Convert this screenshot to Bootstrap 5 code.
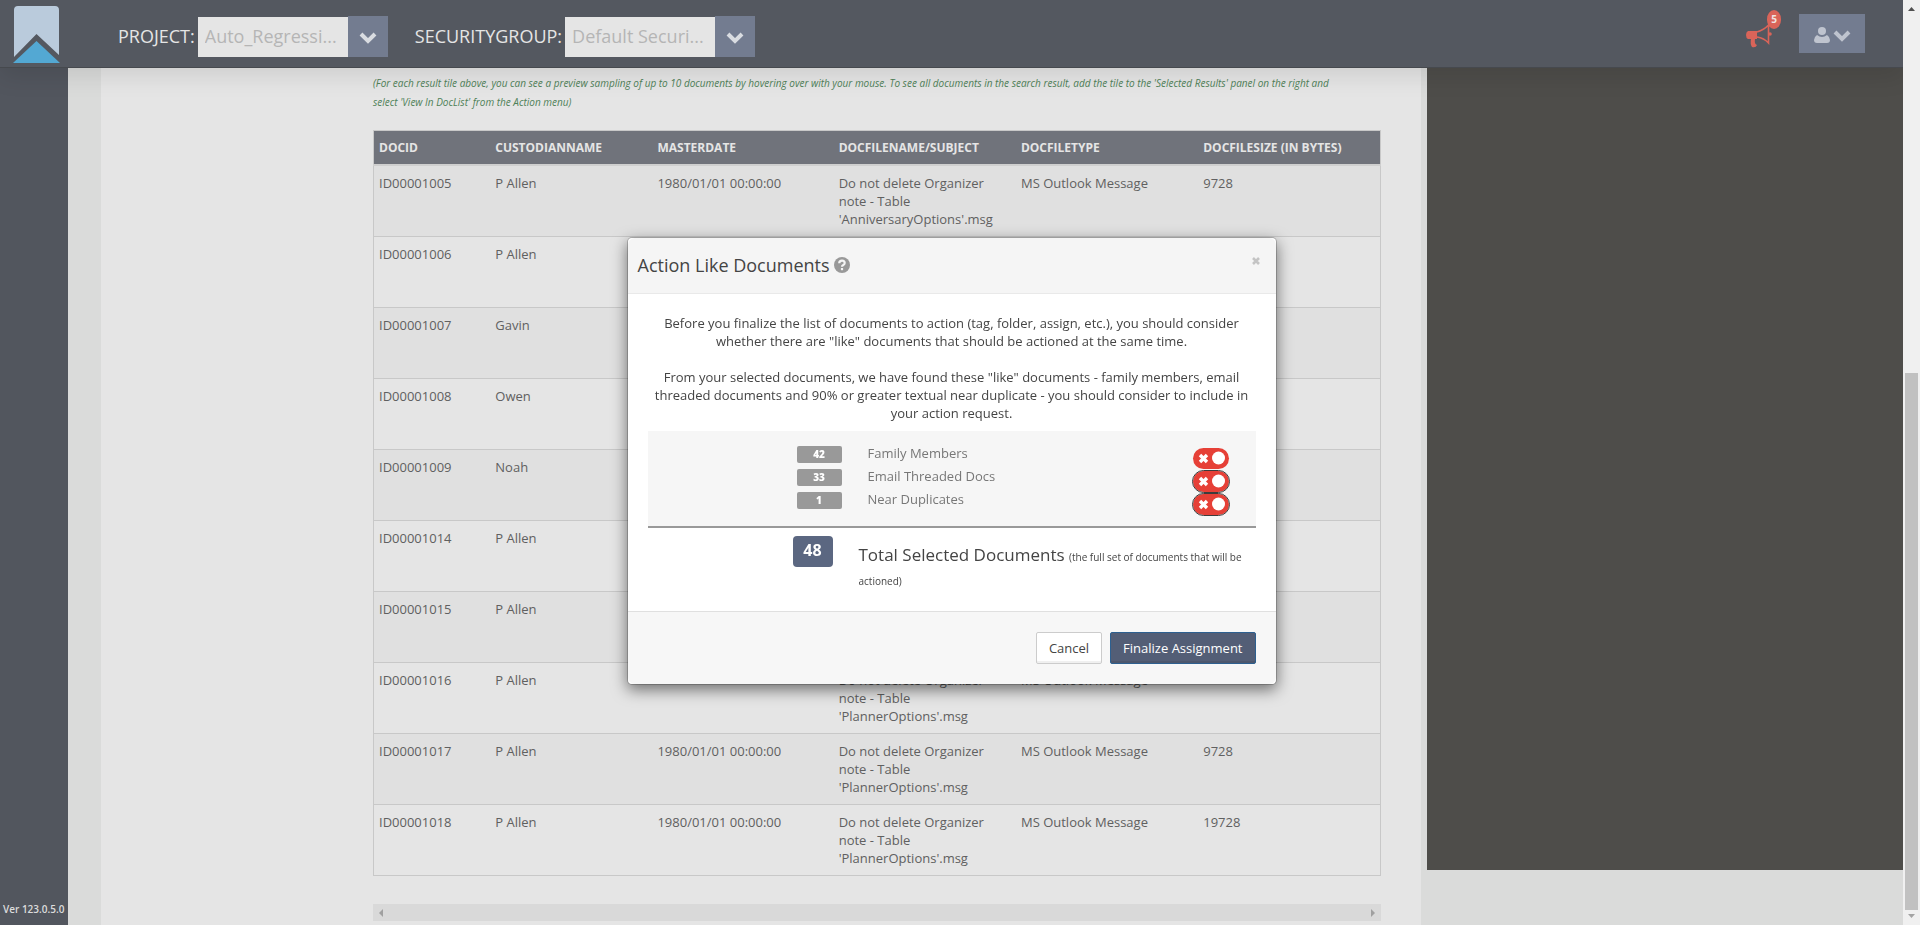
<!DOCTYPE html>
<html lang="en">
<head>
<meta charset="utf-8">
<meta name="viewport" content="width=device-width, initial-scale=1">
<title>Action Like Documents</title>
<link href="https://cdn.jsdelivr.net/npm/bootstrap@5.3.0/dist/css/bootstrap.min.css" rel="stylesheet">
<style>
body{font-family:"Open Sans","Noto Sans",sans-serif;font-size:13px;line-height:18px;color:#606060;background:#dadbda}
.topbar{height:68px;background:#545860;border-bottom:1px solid #46494e;box-shadow:0 8px 24px rgba(0,0,0,.1);z-index:5;padding:0 38px 0 12px}
.brand-mark{width:48px;height:60px}
.pickers{margin-left:58px;padding-top:5px;gap:27px}
.picker label{font-size:18px;line-height:24px;color:#e5e5e5;margin-right:3px}
.picker .picker-text{width:150px;height:40px;margin-top:1px;border:0;background:#e5e5e5;color:#b5b5b5;font-size:18px;padding:0 8px 2px 7px;border-radius:0}
.btn-slate{background:#737c90;border:0;border-radius:0;padding:0}
.picker .btn-slate{width:40px;height:41px}
.user-btn{width:66px;height:39px}
.notice{width:34px;height:36px;margin-right:19px}
.notice-count{top:-6px;left:21px;width:14px;height:19px;border-radius:7px/9px;background:#d96459;color:#f0e4e2;font-size:10px;font-weight:700;line-height:19px}
.sidebar{width:68px;background:#52565e;padding:0 0 7px 3px}
.version{font-size:10px;font-weight:600;color:#dcdcdc}
.results{background:#e5e5e5;margin-left:33px;padding:6px 40px 3px 272px;min-width:0}
.hint{font-size:10px;line-height:19px;font-style:italic;color:#4f8158;margin-bottom:18px}
.doc-table{table-layout:fixed;border:1px solid #c8c8c8;margin-bottom:28px;--bs-table-bg:transparent}
.doc-table>:not(caption)>*>*{padding:8px 5px;border-bottom:1px solid #c8c8c8;color:#606060;box-shadow:none;background:transparent}
.doc-table>thead>tr>th{background:#70737b;color:#e5e5e5;font-size:12px;font-weight:700;border-bottom:2px solid #cfcfcf;padding:8px 5px 7px}
.doc-table>tbody>tr{height:71px}
.doc-table>tbody>tr:nth-child(odd){background:#e0e0e0}
.hscroll{height:17px;background:#d9d9d9;padding:0 5px}
.tray{width:476px;background:#4e4d4a;margin:0 0 55px 6px}
.vscroll{width:17px;background:#f0f0f0;z-index:6;padding:7px 0}
.vscroll-thumb{width:13px;background:#c1c1c1;height:59%}
.modal.like-modal{width:calc(100% - 17px);padding-bottom:4px}
.like-modal .modal-dialog{max-width:650px}
.like-modal .modal-content{border:1px solid rgba(0,0,0,.2);border-radius:5px;box-shadow:0 5px 15px rgba(0,0,0,.5);color:#444}
.like-modal .modal-header{background:#f5f5f5;border-bottom:1px solid #e9e9e9;padding:15px 16px 14px 10px;height:56px}
.like-modal .modal-title{font-size:18px;line-height:24px;font-weight:400;color:#444}
.x-close{background:none;border:0;padding:0;height:8px;line-height:0;margin-top:4px}
.like-modal .modal-body{padding:20px 20px 0}
.like-modal p{margin-bottom:18px}
.like-modal p:last-child{margin-bottom:9px}
.like-panel{background:#f6f6f6;border-bottom:2px solid #999;padding:10px 27px 16px 149px}
.like-row{height:23px;color:#777}
.like-row label{margin-top:3px}
.count-tag{width:45px;height:17px;line-height:17px;background:#999;color:#fff;font-size:10px;font-weight:800;border-radius:2px;margin:5px 26px 0 0}
.like-switch{width:36px;height:21px;border-radius:11px;background:#e64037;margin-top:7px}
.like-switch.outlined{outline:1px solid #3c3c3c}
.like-switch input{opacity:0;inset:0}
.total-line{padding:8px 8px 0 145px}
.total-tag{width:40px;height:31px;line-height:29px;border-radius:4px;background:#5b6781;color:#fff;font-size:16px;font-weight:700;margin-right:26px}
.total-text{font-size:17px;line-height:24px;padding-top:7px;height:75px}
.total-text span{font-size:10px;line-height:18px}
.like-modal .modal-footer{background:#f7f7f7;border-top:1px solid #e0e0e0;padding:20px;gap:8px}
.like-modal .modal-footer>*{margin:0}
.like-modal .modal-footer .btn{font-size:13px;line-height:18px;padding:6px 12px;border-radius:2px;height:32px}
.like-modal .modal-footer .btn-cancel{background:#fff;border:1px solid #ccc;color:#444;box-shadow:inset 0 -2px 0 #f0f0f0}
.btn-finalize{background:#535e76;border:1px solid #2d6090;color:#fff;box-shadow:inset 0 -2px 0 #4d576d}
</style>
</head>
<body>
<div class="d-flex vh-100 overflow-hidden">
  <div class="d-flex flex-column flex-grow-1" style="min-width:0">
    <header class="topbar d-flex align-items-center position-relative flex-shrink-0">
      <a href="#" aria-label="Home" class="d-block lh-1"><svg class="brand-mark" viewBox="0 0 48 60"><path d="M2 53V6q0-4 4-4H43q4 0 4 4V51L24.500 30Z" fill="#bacbdc"/><path d="M1 59 24.500 37 48 59Z" fill="#53a8d3"/></svg></a>
      <form class="pickers d-flex flex-grow-1">
        <div class="picker d-flex align-items-center">
          <label for="project">PROJECT:</label><input id="project" class="picker-text" value="Auto_Regressi..." disabled>
          <button type="button" class="btn btn-slate" aria-label="Choose project"><svg width="18" height="12" viewBox="0 0 18 12"><path d="M2 2 9 9 16 2" fill="none" stroke="#d9dce1" stroke-width="4"/></svg></button>
        </div>
        <div class="picker d-flex align-items-center">
          <label for="group">SECURITYGROUP:</label><input id="group" class="picker-text" value="Default Securi..." disabled>
          <button type="button" class="btn btn-slate" aria-label="Choose security group"><svg width="18" height="12" viewBox="0 0 18 12"><path d="M2 2 9 9 16 2" fill="none" stroke="#d9dce1" stroke-width="4"/></svg></button>
        </div>
      </form>
      <a href="#" class="notice position-relative d-block" aria-label="Notifications"><svg width="27" height="24" viewBox="0 0 27 24" style="margin-top:8px"><path d="M2 7H11V15H9q-1 5 2 6-1 3-5 2-2-3-1-8H2Q0 14 0 11T2 7Z" fill="#d96459"/><path d="M11 8Q18 6 22.500 1V19Q18 14 11 13" fill="none" stroke="#d96459" stroke-width="1.600"/><circle cx="24" cy="10" r="1.800" fill="#d96459"/></svg><span class="notice-count position-absolute text-center">5</span></a>
      <button type="button" class="btn btn-slate user-btn" aria-label="Account"><svg width="38" height="18" viewBox="0 0 38 18"><circle cx="9" cy="5" r="4" fill="#bfc4cf"/><path d="M4 9q5 4 10 0 3 2 3 5 0 3-3 3H4q-3 0-3-3 0-3 3-5Z" fill="#bfc4cf"/><path d="M22 6 29 13 36 6" fill="none" stroke="#bfc4cf" stroke-width="4"/></svg></button>
    </header>
    <div class="d-flex flex-grow-1" style="min-height:0">
      <aside class="sidebar d-flex align-items-end flex-shrink-0"><span class="version">Ver 123.0.5.0</span></aside>
      <main class="results flex-grow-1">
        <p class="hint">(For each result tile above, you can see a preview sampling of up to 10 documents by hovering over with your mouse. To see all documents in the search result, add the tile to the 'Selected Results' panel on the right and<br>select 'View In DocList' from the Action menu)</p>
        <table class="table doc-table align-top">
          <colgroup><col style="width:11.600%"><col style="width:16.100%"><col style="width:18%"><col style="width:18.100%"><col style="width:18.100%"><col style="width:18.100%"></colgroup>
          <thead><tr><th>DOCID</th><th>CUSTODIANNAME</th><th>MASTERDATE</th><th>DOCFILENAME/SUBJECT</th><th>DOCFILETYPE</th><th>DOCFILESIZE (IN BYTES)</th></tr></thead>
          <tbody>
            <tr><td>ID00001005</td><td>P Allen</td><td>1980/01/01 00:00:00</td><td>Do not delete Organizer note - Table 'AnniversaryOptions'.msg</td><td>MS Outlook Message</td><td>9728</td></tr>
            <tr><td>ID00001006</td><td>P Allen</td><td></td><td></td><td></td><td></td></tr>
            <tr><td>ID00001007</td><td>Gavin</td><td></td><td></td><td></td><td></td></tr>
            <tr><td>ID00001008</td><td>Owen</td><td></td><td></td><td></td><td></td></tr>
            <tr><td>ID00001009</td><td>Noah</td><td></td><td></td><td></td><td></td></tr>
            <tr><td>ID00001014</td><td>P Allen</td><td></td><td></td><td></td><td></td></tr>
            <tr><td>ID00001015</td><td>P Allen</td><td></td><td></td><td></td><td></td></tr>
            <tr><td>ID00001016</td><td>P Allen</td><td></td><td>Do not delete Organizer note - Table 'PlannerOptions'.msg</td><td>MS Outlook Message</td><td></td></tr>
            <tr><td>ID00001017</td><td>P Allen</td><td>1980/01/01 00:00:00</td><td>Do not delete Organizer note - Table 'PlannerOptions'.msg</td><td>MS Outlook Message</td><td>9728</td></tr>
            <tr><td>ID00001018</td><td>P Allen</td><td>1980/01/01 00:00:00</td><td>Do not delete Organizer note - Table 'PlannerOptions'.msg</td><td>MS Outlook Message</td><td>19728</td></tr>
          </tbody>
        </table>
        <div class="hscroll d-flex justify-content-between align-items-center"><svg width="5" height="8"><path d="M5 0V8L1 4Z" fill="#a0a0a0"/></svg><svg width="5" height="8"><path d="M0 0V8L4 4Z" fill="#a0a0a0"/></svg></div>
      </main>
      <aside class="tray flex-shrink-0"></aside>
    </div>
  </div>
  <div class="vscroll d-flex flex-column align-items-center flex-shrink-0">
    <svg class="mb-auto flex-shrink-0" width="7" height="4"><path d="M0 4H7L3.500 0Z" fill="#505050"/></svg>
    <div class="vscroll-thumb flex-shrink-0"></div>
    <svg class="mt-1 flex-shrink-0" width="7" height="4"><path d="M0 0H7L3.500 4Z" fill="#a3a3a3"/></svg>
  </div>
</div>

<div class="modal like-modal d-block" tabindex="-1" role="dialog" aria-labelledby="likeTitle">
  <div class="modal-dialog modal-dialog-centered">
    <div class="modal-content">
      <div class="modal-header align-items-start">
        <h4 class="modal-title d-flex align-items-center" id="likeTitle">Action Like Documents<svg class="ms-1" width="16" height="16" viewBox="0 0 16 16"><circle cx="8" cy="8" r="8" fill="#999"/><path d="M5.200 6.200Q5.300 3.600 8 3.600T10.700 6Q10.700 7.400 9 8.200 8 8.700 8 9.800" fill="none" stroke="#f5f5f5" stroke-width="2.200"/><path d="M6.900 11H9.100V13.200H6.900Z" fill="#f5f5f5"/></svg></h4>
        <button type="button" class="x-close" aria-label="Close"><svg width="8" height="8" viewBox="0 0 8 8"><path d="M1 1 7 7M7 1 1 7" stroke="#c4c4c4" stroke-width="2.600"/></svg></button>
      </div>
      <div class="modal-body">
        <div class="text-center">
          <p>Before you finalize the list of documents to action (tag, folder, assign, etc.), you should consider whether there are "like" documents that should be actioned at the same time.</p>
          <p>From your selected documents, we have found these "like" documents - family members, email threaded documents and 90% or greater textual near duplicate - you should consider to include in your action request.</p>
        </div>
        <div class="like-panel">
          <div class="like-row d-flex align-items-start"><span class="count-tag text-center">42</span><label for="family">Family Members</label><span class="like-switch position-relative ms-auto"><input id="family" type="checkbox" class="position-absolute"><svg class="d-block" width="36" height="21"><path d="M7 7 14 14M14 7 7 14" stroke="#fff" stroke-width="3.400"/><circle cx="25.500" cy="10" r="6.500" fill="#fff"/></svg></span></div>
          <div class="like-row d-flex align-items-start"><span class="count-tag text-center">33</span><label for="threads">Email Threaded Docs</label><span class="like-switch outlined position-relative ms-auto"><input id="threads" type="checkbox" class="position-absolute"><svg class="d-block" width="36" height="21"><path d="M7 7 14 14M14 7 7 14" stroke="#fff" stroke-width="3.400"/><circle cx="25.500" cy="10" r="6.500" fill="#fff"/></svg></span></div>
          <div class="like-row d-flex align-items-start"><span class="count-tag text-center">1</span><label for="dupes">Near Duplicates</label><span class="like-switch outlined position-relative ms-auto"><input id="dupes" type="checkbox" class="position-absolute"><svg class="d-block" width="36" height="21"><path d="M7 7 14 14M14 7 7 14" stroke="#fff" stroke-width="3.400"/><circle cx="25.500" cy="10" r="6.500" fill="#fff"/></svg></span></div>
        </div>
        <div class="total-line d-flex align-items-start">
          <span class="total-tag text-center flex-shrink-0">48</span>
          <div class="total-text">Total Selected Documents <span>(the full set of documents that will be actioned)</span></div>
        </div>
      </div>
      <div class="modal-footer">
        <button type="button" class="btn btn-cancel">Cancel</button>
        <button type="button" class="btn btn-finalize">Finalize Assignment</button>
      </div>
    </div>
  </div>
</div>
<script src="https://cdn.jsdelivr.net/npm/bootstrap@5.3.0/dist/js/bootstrap.bundle.min.js"></script>
</body>
</html>
